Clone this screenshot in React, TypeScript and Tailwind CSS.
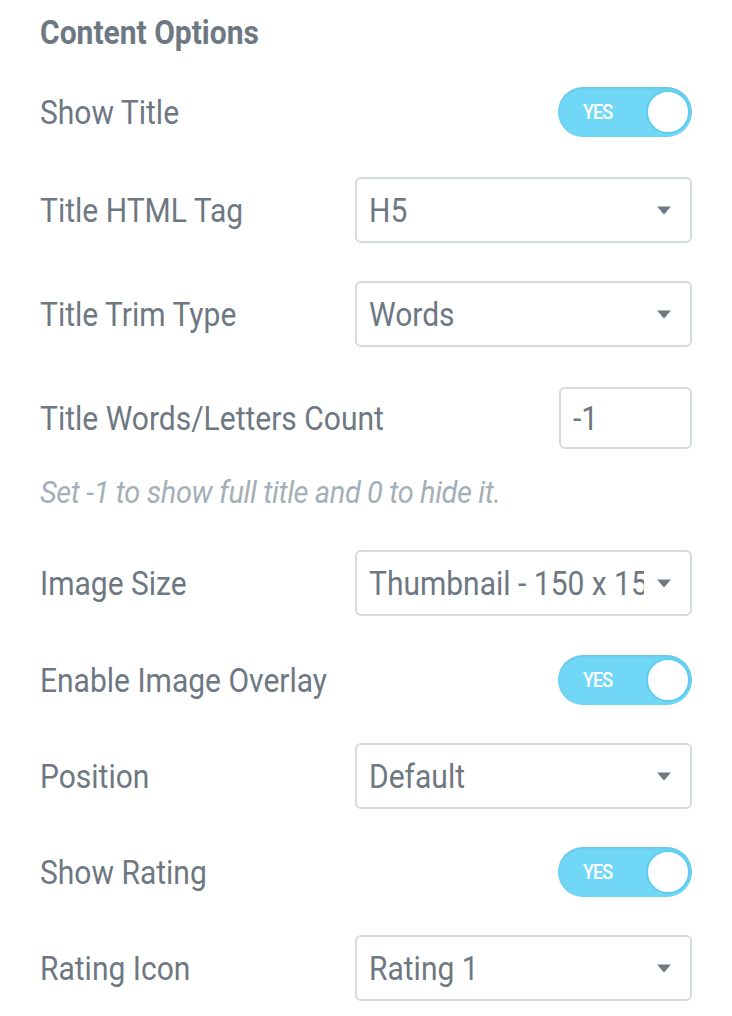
import React from "react";

const Toggle = () => {
  return (
    <div className="relative w-[134px] h-[50px] rounded-full bg-[#71d7f7] shadow-[inset_0_1px_3px_rgba(0,0,0,0.12)]">
      <span className="absolute left-[25px] top-0 h-[50px] leading-[50px] text-[18px] font-medium text-white tracking-[-1px] scale-y-110">
        YES
      </span>
      <span className="absolute right-[2px] top-[3px] w-[44px] h-[44px] rounded-full bg-white border-2 border-[#5fcdf0]" />
    </div>
  );
};

const Caret = () => (
  <svg width="16" height="9" viewBox="0 0 16 9" className="shrink-0">
    <path d="M1 0.5 L15 0.5 L8 8.5 Z" fill="#6d7882" />
  </svg>
);

const Select = ({ value }: { value: string }) => {
  return (
    <div className="w-[337px] h-[66px] rounded-[6px] border-2 border-[#d5dadf] bg-white flex items-center pl-[12px] pr-[18px] gap-3">
      <span className="flex-1 overflow-hidden whitespace-nowrap text-[30px] text-[#6d7882] scale-y-110">
        {value}
      </span>
      <Caret />
    </div>
  );
};

const Row = ({
  label,
  children,
  className,
}: {
  label: string;
  children: React.ReactNode;
  className?: string;
}) => (
  <div className={`flex items-center justify-between ${className ?? ""}`}>
    <span className="inline-block text-[30px] text-[#6d7882] scale-y-110">{label}</span>
    {children}
  </div>
);

export default function App() {
  return (
    <div
      className="w-[732px] h-[1016px] bg-white pl-[40px] pr-[40px] pt-[16px]"
      style={{ fontFamily: "Roboto, 'Noto Sans', sans-serif" }}
    >
      <h3 className="inline-block text-[30px] font-bold leading-[34px] text-[#6d7882] scale-y-110 origin-left">
        Content Options
      </h3>

      <Row label="Show Title" className="mt-[37px] h-[50px]">
        <Toggle />
      </Row>

      <Row label="Title HTML Tag" className="mt-[40px] h-[66px]">
        <Select value="H5" />
      </Row>

      <Row label="Title Trim Type" className="mt-[38px] h-[66px]">
        <Select value="Words" />
      </Row>

      <Row label="Title Words/Letters Count" className="mt-[40px] h-[62px]">
        <div className="w-[133px] h-[62px] rounded-[6px] border-2 border-[#d5dadf] flex items-center pl-[12px]">
          <span className="inline-block text-[30px] text-[#6d7882] scale-y-110">-1</span>
        </div>
      </Row>

      <p className="mt-[26px] text-[29px] italic leading-[34px] text-[#a4afb7] tracking-[-0.4px]">
        <span className="inline-block scale-y-110">Set -1 to show full title and 0 to hide it.</span>
      </p>

      <Row label="Image Size" className="mt-[41px] h-[66px]">
        <Select value="Thumbnail - 150 x 150" />
      </Row>

      <Row label="Enable Image Overlay" className="mt-[39px] h-[50px]">
        <Toggle />
      </Row>

      <Row label="Position" className="mt-[38px] h-[66px]">
        <Select value="Default" />
      </Row>

      <Row label="Show Rating" className="mt-[38px] h-[50px]">
        <Toggle />
      </Row>

      <Row label="Rating Icon" className="mt-[38px] h-[66px]">
        <Select value="Rating 1" />
      </Row>
    </div>
  );
}
